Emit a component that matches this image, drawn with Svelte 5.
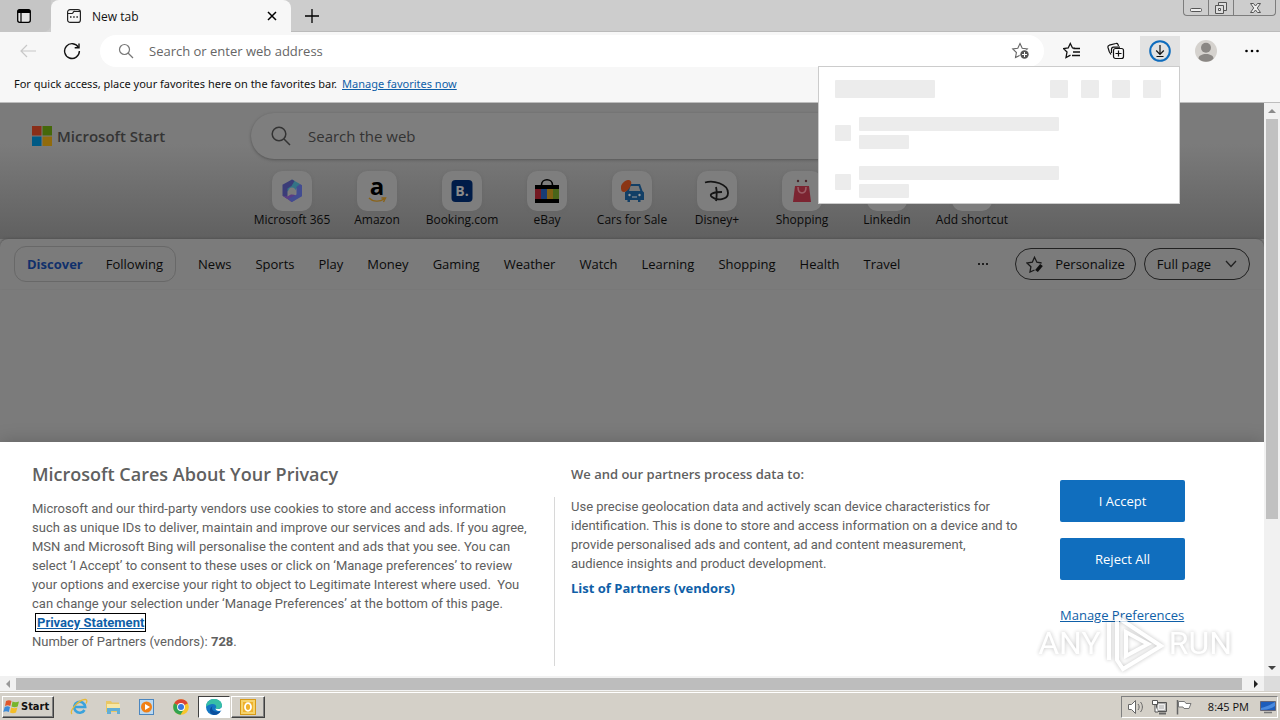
<script lang="ts">
	type Shortcut = { name: string; icon: string };

	const shortcuts: Shortcut[] = [
		{ name: 'Microsoft 365', icon: 'm365' },
		{ name: 'Amazon', icon: 'amazon' },
		{ name: 'Booking.com', icon: 'booking' },
		{ name: 'eBay', icon: 'ebay' },
		{ name: 'Cars for Sale', icon: 'cars' },
		{ name: 'Disney+', icon: 'disney' },
		{ name: 'Shopping', icon: 'shopping' },
		{ name: 'Linkedin', icon: 'linkedin' },
		{ name: 'Add shortcut', icon: 'add' }
	];

	const topics = ['News', 'Sports', 'Play', 'Money', 'Gaming', 'Weather', 'Watch', 'Learning', 'Shopping', 'Health', 'Travel'];

	let address = $state('');
	let query = $state('');
	let downloadsOpen = $state(true);
	let feed = $state('Discover');
</script>

<div class="desktop">
	<!-- Tab strip -->
	<header class="tabs">
		<button class="tab-actions" aria-label="Tab actions menu">
			<svg width="16" height="16" viewBox="0 0 16 16"><rect x="1.7" y="1.7" width="12.6" height="12.6" rx="2" fill="#e4e4e4" stroke="#000" stroke-width="1.3" /><path d="M1.5 5V3.5a2 2 0 0 1 2-2h9a2 2 0 0 1 2 2V5z" /><path d="M5 5v9" stroke="#000" stroke-width="1.2" /></svg>
		</button>
		<div class="tab">
			<svg width="16" height="16" viewBox="0 0 16 16" fill="none" stroke="#222" stroke-width="1.2"><rect x="1.6" y="1.6" width="12.8" height="12.8" rx="2.5" /><path d="M1.6 5.5H6c1 0 1-1 1.500-1.700S8.500 3.500 9 3.500h5" /><path d="M4 9h1.500M7.200 9h1.500M10.400 9h1.500" stroke-width="1.500" /></svg>
			<span>New tab</span>
			<button class="close-tab" aria-label="Close tab">
				<svg width="10" height="10" viewBox="0 0 10 10" stroke="#000" stroke-width="1.500"><path d="M1 1l8 8M9 1L1 9" /></svg>
			</button>
		</div>
		<button class="new-tab" aria-label="New tab">
			<svg width="14" height="14" viewBox="0 0 14 14" stroke="#000" stroke-width="1.300"><path d="M7 0v14M0 7h14" /></svg>
		</button>
		<div class="caption">
			<button aria-label="Minimize"><svg width="24" height="16" viewBox="0 0 24 16"><rect x="6.500" y="8.500" width="11" height="3" rx="1" fill="#eee" stroke="#555" /></svg></button>
			<button aria-label="Restore"><svg width="24" height="16" viewBox="0 0 24 16" fill="#ddd" stroke="#555"><path d="M9.500 2.500h8v8h-8z" /><path d="M6.500 5.500h8v8h-8z" /><path d="M9.500 8.500h2v2h-2z" fill="#fff" /></svg></button>
			<button class="wide" aria-label="Close"><svg width="24" height="16" viewBox="0 0 24 16"><path d="M7.500 3.500h3L12.500 6l2-2.500h3L14.300 8l3.200 4.500h-3l-2-2.500-2 2.500h-3L10.700 8z" fill="#eee" stroke="#555" /></svg></button>
		</div>
	</header>

	<!-- Address bar and browser buttons -->
	<div class="toolbar">
		<button class="tool" aria-label="Back" disabled>
			<svg width="16" height="14" viewBox="0 0 16 14" fill="none" stroke="#c8c8c8" stroke-width="1.200"><path d="M16 7H1M7 1L1 7l6 6" /></svg>
		</button>
		<button class="tool" aria-label="Refresh">
			<svg width="18" height="18" viewBox="0 0 18 18" fill="none" stroke="#111" stroke-width="1.400"><path d="M15.500 5.500A7.400 7.400 0 1 0 16.400 9" /><path d="M16 1.500v4.300h-4.300" /></svg>
		</button>
		<label class="address">
			<svg width="16" height="16" viewBox="0 0 16 16" fill="none" stroke="#777" stroke-width="1.200"><circle cx="6.500" cy="6.500" r="5" /><path d="M10 10l5 5" /></svg>
			<input type="text" placeholder="Search or enter web address" aria-label="Address" bind:value={address} />
			<button aria-label="Add this page to favorites">
				<svg width="20" height="18" viewBox="0 0 20 18"><path d="M9 1.500l2.200 4.700 5.100.7-3.700 3.600.9 5.100L9 13.200l-4.500 2.400.9-5.100L1.700 6.900l5.100-.7z" fill="none" stroke="#666" stroke-width="1.100" /><circle cx="13.500" cy="12.500" r="5" fill="#fff" /><circle cx="13.500" cy="12.500" r="4.200" fill="#555" /><path d="M13.500 10v5M11 12.500h5" stroke="#fff" /></svg>
			</button>
		</label>
		<button class="tool" aria-label="Favorites">
			<svg width="18" height="18" viewBox="0 0 18 18" fill="none" stroke="#111" stroke-width="1.300"><path d="M12 6.300L9.500 6 7.300 1.500 5.200 6l-4.600.6L4 10l-1 5.500 4.500-2.400" /><path d="M10.500 6.500H17M10 10h7M9 13.500h8" /></svg>
		</button>
		<button class="tool" aria-label="Collections">
			<svg width="18" height="18" viewBox="0 0 18 18" fill="none" stroke="#111" stroke-width="1.200"><path d="M4 12.500L2.200 9.500 1 5.500c-.3-1.200.3-2 1.300-2.300l6.500-1.700c1-.3 1.800.1 2.200 1l.5 1.500" /><path d="M4.500 11V7.500c0-1.500.6-2.300 2-2.300H13" /><rect x="6.500" y="6.500" width="10" height="10" rx="2" /><path d="M11.500 8.500v6M8.500 11.500h6" /></svg>
		</button>
		<div class="downloads">
			<button class="tool active" aria-label="Downloads" onclick={() => (downloadsOpen = !downloadsOpen)}>
				<svg width="22" height="22" viewBox="0 0 22 22" fill="none"><circle cx="11" cy="11" r="9.800" stroke="#0f6cbd" stroke-width="2" /><path d="M11 5v9M7.200 10.500L11 14.300l3.800-3.800M7.500 16.500h7" stroke="#111" stroke-width="1.200" /></svg>
			</button>
			{#if downloadsOpen}
				<div class="popup">
					<div class="popup-head">
						<i class="title"></i>
						<i></i><i></i><i></i><i></i>
					</div>
					{#each [0, 1] as row (row)}
						<div class="popup-row">
							<i class="thumb"></i>
							<div>
								<i class="long"></i>
								<i class="short"></i>
							</div>
						</div>
					{/each}
				</div>
			{/if}
		</div>
		<button class="tool profile" aria-label="Profile">
			<svg width="22" height="22" viewBox="0 0 22 22"><circle cx="11" cy="11" r="11" fill="#d5d2ce" /><circle cx="11" cy="7.800" r="5" fill="#8a8784" /><path d="M3.500 18.500c0-6 15-6 15 0-3.500 4.300-11.500 4.300-15 0z" fill="#8a8784" /></svg>
		</button>
		<button class="tool menu" aria-label="Settings and more">
			<svg width="14" height="4" viewBox="0 0 14 4"><circle cx="1.500" cy="2" r="1.300" /><circle cx="7" cy="2" r="1.300" /><circle cx="12.500" cy="2" r="1.300" /></svg>
		</button>
	</div>

	<div class="favorites">
		<span>For quick access, place your favorites here on the favorites bar.</span>
		<a href="#favorites">Manage favorites now</a>
	</div>

	<div class="viewport">
		<main class="page">
			<section class="hero">
				<a class="brand" href="#start">
					<svg width="20" height="20" viewBox="0 0 20 20"><path fill="#8a2e18" d="M0 0h9.500v9.500H0z" /><path fill="#45680a" d="M10.500 0H20v9.500h-9.500z" /><path fill="#005a85" d="M0 10.500h9.500V20H0z" /><path fill="#916b0c" d="M10.500 10.500H20V20h-9.500z" /></svg>
					<span>Microsoft Start</span>
				</a>
				<label class="search">
					<svg width="20" height="20" viewBox="0 0 20 20" fill="none" stroke="#333" stroke-width="1.500"><circle cx="8" cy="8" r="6.800" /><path d="M13 13l6 6" /></svg>
					<input type="text" placeholder="Search the web" aria-label="Search the web" bind:value={query} />
				</label>
				<nav class="shortcuts">
					{#each shortcuts as s (s.name)}
						<a href="#{s.icon}">
							<span class="tile">
								<svg width="26" height="26" viewBox="0 0 26 26">
									{#if s.icon === 'm365'}
										<path d="M13 1.500l8 4.500-5 6.500-3-2-5 3v-7z" fill="#347386" /><path d="M13 1.500L3.500 6.800v11l5 3.200V10.500l4-2.500 3-5z" fill="#3b3c78" /><path d="M3.500 17.500l9 6.500 3.500-2v-5l-3.500-1-4 2.500z" fill="#5a3c85" /><path d="M21 6l2 1.200v11L13 24l-4-3 8.500-4.500V9z" fill="#424c91" /><circle cx="13" cy="13" r="3.500" fill="#7b7b7b" />
									{:else if s.icon === 'amazon'}
										<text x="13" y="17" text-anchor="middle" font-family="Open Sans, sans-serif" font-weight="700" font-size="24">a</text><path d="M5 20c4 4 11 4 15 1M17.500 20h4l-2 4" fill="none" stroke="#8a6319" stroke-width="1.400" />
									{:else if s.icon === 'booking'}
										<rect x="2.500" y="2" width="21" height="22" rx="4" fill="#001c48" /><text x="13" y="18" text-anchor="middle" font-family="Open Sans, sans-serif" font-weight="700" font-size="14" fill="#8a8a8a">B.</text>
									{:else if s.icon === 'ebay'}
										<path d="M1 7h24v18H1z" /><path d="M7.500 7c0-7 11-7 11 0" fill="none" stroke="#000" stroke-width="1.600" /><path d="M1 11h6v10H1z" fill="#741922" /><path d="M7 11h6v10H7z" fill="#173c75" /><path d="M13 11h6v10h-6z" fill="#806013" /><path d="M19 11h6v10h-6z" fill="#49651a" />
									{:else if s.icon === 'cars'}
										<path d="M10 6h11l2.500 7 1.500 1.500V22h-3.500v2H19v-2h-8v2H8.500v-2H6v-8l2-1.500z" fill="#123f66" /><path d="M11.500 8h8.200l1.600 5H10z" fill="#777" /><circle cx="10.500" cy="17" r="1.200" fill="#999" /><circle cx="20.500" cy="17" r="1.200" fill="#999" /><path d="M13 19h5" stroke="#999" /><path d="M2 9c0-3 4-7 7-7 2.500 0 4 2 3 4.500C11 10 8 14 5 14S2 11 2 9z" fill="#8b3513" />
									{:else if s.icon === 'disney'}
										<path d="M1 4.500c8-2.500 23 1 23 10.500 0 7-11 8-16 4-4-3 2-5 10-5M12 9c1 4 1 8 0 14" fill="none" stroke="#151515" stroke-width="1.800" />
									{:else if s.icon === 'shopping'}
										<path d="M6 8h14l2 16H4z" fill="#7c2431" /><path d="M9 9c0 8 8 8 8 0" fill="none" stroke="#9b5c65" stroke-width="1.600" /><circle cx="9" cy="3" r="1.200" fill="#48252a" /><circle cx="17" cy="3" r="1.200" fill="#48252a" />
									{/if}
								</svg>
							</span>
							<span class="name">{s.name}</span>
						</a>
					{/each}
				</nav>
			</section>

			<section class="feed">
				<div class="feed-switch">
					{#each ['Discover', 'Following'] as name (name)}
						<button class:selected={feed === name} onclick={() => (feed = name)}>{name}</button>
					{/each}
				</div>
				<nav class="topics">
					{#each topics as topic (topic)}
						<a href="#{topic.toLowerCase()}">{topic}</a>
					{/each}
				</nav>
				<button class="more" aria-label="More topics">
					<svg width="12" height="4" viewBox="0 0 12 4"><circle cx="2" cy="2" r="1" /><circle cx="6" cy="2" r="1" /><circle cx="10" cy="2" r="1" /></svg>
				</button>
				<button class="pill">
					<svg width="18" height="18" viewBox="0 0 18 18" fill="none" stroke="#1a1a1a" stroke-width="1.300"><path d="M8.500 15l-4.500 2 .9-5.300L1 8l5.300-.8L8.500 2.200l2.400 5 4.700.8" /><path d="M15.500 10l-5 6" stroke="#111" stroke-width="3.500" /></svg>
					Personalize
				</button>
				<button class="pill view">
					Full page
					<svg width="12" height="8" viewBox="0 0 12 8" fill="none" stroke="#222" stroke-width="1.300"><path d="M1 1l5 5.500L11 1" /></svg>
				</button>
			</section>

			<!-- Consent banner -->
			<section class="consent">
				<div class="about">
					<h2>Microsoft Cares About Your Privacy</h2>
					<p>
						Microsoft and our third-party vendors use cookies to store and access information<br />
						such as unique IDs to deliver, maintain and improve our services and ads. If you agree,<br />
						MSN and Microsoft Bing will personalise the content and ads that you see. You can<br />
						select ‘I Accept’ to consent to these uses or click on ‘Manage preferences’ to review<br />
						your options and exercise your right to object to Legitimate Interest where used.&nbsp; You<br />
						can change your selection under ‘Manage Preferences’ at the bottom of this page.<br />
						<a class="statement" href="#privacy">Privacy Statement</a><br />
						Number of Partners (vendors): <b>728</b>.
					</p>
				</div>
				<div class="purposes">
					<h3>We and our partners process data to:</h3>
					<p>
						Use precise geolocation data and actively scan device characteristics for<br />
						identification. This is done to store and access information on a device and to<br />
						provide personalised ads and content, ad and content measurement,<br />
						audience insights and product development.
					</p>
					<a href="#vendors">List of Partners (vendors)</a>
				</div>
				<div class="choices">
					<button>I Accept</button>
					<button>Reject All</button>
					<a href="#preferences">Manage Preferences</a>
				</div>
			</section>
		</main>

		<div class="scroll-y">
			<svg width="16" height="16" viewBox="0 0 16 16"><path d="M4 10l4-4 4 4z" fill="#8a8a8a" /></svg>
			<div class="track"><div class="thumb"></div></div>
			<svg width="16" height="16" viewBox="0 0 16 16"><path d="M4 6l4 4 4-4z" fill="#444" /></svg>
		</div>
	</div>

	<div class="scroll-x">
		<svg width="16" height="16" viewBox="0 0 16 16"><path d="M10 4L6 8l4 4z" fill="#999" /></svg>
		<div class="thumb"></div>
		<svg width="16" height="16" viewBox="0 0 16 16"><path d="M6 4l4 4-4 4z" fill="#222" /></svg>
		<span class="corner"></span>
	</div>

	<footer class="taskbar">
		<button class="start">
			<svg width="17" height="16" viewBox="0 0 17 16"><path d="M3 2c2-1 4-1 5.500 0L7.300 7C5.500 6 4 6 2 7z" fill="#e0562a" /><path d="M9.500 2.500c2 1 4 1 6.500 0L14.700 7.500c-2 1-4 1-6.200 0z" fill="#77b52d" /><path d="M1.700 8c2-1 3.500-1 5.300 0L5.800 13c-2-1-3.500-1-5.500 0z" fill="#3c8ad8" /><path d="M8.200 8.500c2 1 4 1 6.200 0L13 13.500c-2 1-4 1-6 0z" fill="#f3bd28" /></svg>
			Start
		</button>
		<button class="task" aria-label="Internet Explorer">
			<svg width="18" height="18" viewBox="0 0 18 18" fill="none"><path d="M14.500 12a5.500 5.500 0 1 1 .7-3H4.500" stroke="#3aa2dc" stroke-width="2.600" /><path d="M2 16C-1 13 9 1 15.500 1.500c2 .3 1.500 2.500.5 4" stroke="#e7b935" stroke-width="1.300" /></svg>
		</button>
		<button class="task" aria-label="Explorer">
			<svg width="18" height="18" viewBox="0 0 18 18"><path d="M2 3h5l1 1.500h7V14H2z" fill="#e9c765" /><path d="M3 6h13v4H3z" fill="#f7e7a5" /><path d="M3 10h13v6h-3v-3H7v3H3z" fill="#62aed6" /></svg>
		</button>
		<button class="task" aria-label="Media Player">
			<svg width="18" height="18" viewBox="0 0 18 18"><rect x="1.500" y="1.500" width="14" height="15" fill="#bcd9f1" stroke="#4b86bf" /><circle cx="8.500" cy="9" r="5.500" fill="#f08016" /><path d="M7 6l5 3-5 3z" fill="#fff" /></svg>
		</button>
		<button class="task" aria-label="Chrome">
			<svg width="18" height="18" viewBox="0 0 18 18"><circle cx="9" cy="9" r="7.800" fill="#f7c52b" /><path d="M9 9L2.200 5.200A7.800 7.800 0 0 1 15.800 5.200z" fill="#dc4434" /><path d="M2.200 5.200A7.800 7.800 0 0 0 8.500 16.800L12 11 9 9z" fill="#31a350" /><circle cx="9" cy="9" r="3.900" fill="#fff" /><circle cx="9" cy="9" r="3" fill="#3977dd" /></svg>
		</button>
		<button class="task current" aria-label="Edge">
			<svg width="18" height="18" viewBox="0 0 18 18"><circle cx="9" cy="9" r="8" fill="#1477c4" /><path d="M1 9C1-1.500 17-1 17 7.500c0 3-4 4.500-6.500 3 2-2.500-.5-5-3.500-4.500S2 7.500 1 9z" fill="#37bfa7" /><path d="M7.500 8c-2 4 2 7 8 5.200-1.500 2.600-4 4-7 3.700-4-1-5-5.900-1-8.900z" fill="#0b4f9d" /><path d="M10.500 10.500c2.500 1.500 6.500 0 6.500-2v3.500c-2.500 1.800-6.500 1-6.500-1.500z" fill="#fff" /></svg>
		</button>
		<button class="task open" aria-label="Outlook">
			<svg width="18" height="18" viewBox="0 0 18 18"><rect x="1.500" y="1.500" width="15" height="15" fill="#f6d36c" stroke="#d79a17" /><path d="M4 4h10v10H4z" fill="#efb12c" /><ellipse cx="9" cy="9" rx="3" ry="3.800" fill="none" stroke="#fff" stroke-width="1.800" /></svg>
		</button>
		<div class="tray">
			<svg width="18" height="16" viewBox="0 0 18 16" fill="none" stroke="#666"><path d="M1.500 5.500h3l4-4v13l-4-4h-3z" fill="#fff" /><path d="M11 5c1.500 2 1.500 4 0 6M13.500 3c2.500 3 2.500 7 0 10" /></svg>
			<svg width="18" height="16" viewBox="0 0 18 16"><path d="M5.500 3.500h10v9h-10z" fill="#aaa" stroke="#555" /><path d="M7.500 5.500h6v5h-6z" fill="#ccc" stroke="#eee" /><path d="M8 14.500h7" stroke="#666" stroke-width="2" /><path d="M1.500 1.500h5v4h-5zM4 5.500V13h3" fill="#fff" stroke="#555" /></svg>
			<svg width="18" height="16" viewBox="0 0 18 16"><path d="M2.500 1v14.500" stroke="#666" stroke-width="1.500" /><path d="M3.500 2.500h6l1.500 2h5l-2 5H9l-1-1.500H3.500z" fill="#fff" stroke="#777" /></svg>
			<time>8:45 PM</time>
			<svg width="16" height="16" viewBox="0 0 16 16"><path d="M.5 2.500h15v9H.5z" fill="#1d5dbb" stroke="#667" /><path d="M1 9c5-1 9-3 14-6v4c-4 3-9 4-14 4z" fill="#4a8ade" /><path d="M4 13.500h8" stroke="#777" stroke-width="1.500" /></svg>
		</div>
	</footer>

	<div class="watermark">
		<span>ANY</span>
		<svg width="60" height="62" viewBox="0 0 60 62" fill="none" stroke="#fff" stroke-width="4"><path d="M4 10v38M12 5v43l6 9 38-23L12 5" /><path d="M21 20v24l22-12z" /></svg>
		<span>RUN</span>
	</div>
</div>

<style>
	:global(body) {
		margin: 0;
		background: #f7f7f7;
	}

	.desktop {
		display: flex;
		flex-direction: column;
		min-height: 100vh;
		position: relative;
		font: 12px 'Open Sans', 'Noto Sans', sans-serif;
		color: #111;
		white-space: nowrap;
	}

	button,
	input {
		font: inherit;
		color: inherit;
		border: none;
		background: none;
		padding: 0;
		margin: 0;
	}

	input {
		flex: 1;
		min-width: 0;
		outline: none;
	}

	input::placeholder {
		color: inherit;
		opacity: 1;
	}

	a {
		color: #0f5fa8;
	}

	svg {
		display: block;
		flex: none;
	}

	/* Tabs */
	.tabs {
		display: flex;
		height: 32px;
		background: #cdcdcd;
	}

	.tab-actions {
		width: 51px;
		display: flex;
		align-items: center;
		padding-left: 16px;
		background: #c5c5c5;
		border-radius: 0 0 8px 0;
	}

	.tab {
		display: flex;
		align-items: center;
		gap: 10px;
		width: 211px;
		padding: 0 14px 0 15px;
		background: #f7f7f7;
		border-radius: 8px 8px 0 0;
	}

	.close-tab {
		margin-left: auto;
	}

	.new-tab {
		width: 42px;
		display: flex;
		align-items: center;
		justify-content: center;
		border-bottom: 1px solid #bbb;
	}

	.caption {
		flex: 1;
		display: flex;
		justify-content: flex-end;
		padding-right: 4px;
		border-bottom: 1px solid #bbb;
	}

	.caption button {
		display: flex;
		justify-content: center;
		width: 25px;
		height: 16px;
		border: 1px solid #7d7d7d;
		border-top: none;
		border-right: none;
	}

	.caption button:first-child {
		border-radius: 0 0 0 4px;
	}

	.caption .wide {
		width: 43px;
		border-right: 1px solid #7d7d7d;
		border-radius: 0 0 4px 0;
	}

	/* Toolbar */
	.toolbar {
		display: flex;
		align-items: center;
		gap: 4px;
		padding: 3px 8px 4px;
		background: #f7f7f7;
	}

	.tool {
		display: flex;
		align-items: center;
		justify-content: center;
		width: 40px;
		height: 30px;
	}

	.tool.active {
		background: #e2e2e2;
	}

	.profile,
	.menu {
		margin-left: 2px;
	}

	.address {
		flex: 1;
		display: flex;
		align-items: center;
		gap: 15px;
		height: 32px;
		margin: 0 4px;
		padding: 0 13px 0 18px;
		box-sizing: border-box;
		border-radius: 16px;
		background: #fff;
		color: #666;
		font-size: 13px;
	}

	.downloads {
		position: relative;
	}

	.popup {
		position: absolute;
		top: 100%;
		right: 0;
		z-index: 2;
		width: 360px;
		height: 136px;
		border: 1px solid #ccc;
		background: #fff;
	}

	.popup i {
		display: block;
		width: 18px;
		height: 18px;
		border-radius: 1px;
		background: #ececec;
	}

	.popup-head {
		display: flex;
		gap: 13px;
		padding: 13px 18px 19px 16px;
	}

	.popup .title {
		width: 100px;
		margin-right: auto;
	}

	.popup-row {
		display: flex;
		align-items: center;
		gap: 8px;
		padding: 0 16px;
		margin-bottom: 17px;
	}

	.popup .thumb {
		width: 16px;
		height: 16px;
	}

	.popup .long {
		width: 200px;
		height: 14px;
		margin-bottom: 4px;
	}

	.popup .short {
		width: 50px;
		height: 14px;
	}

	.favorites {
		display: flex;
		align-items: center;
		gap: 5px;
		height: 32px;
		padding: 0 14px 6px;
		box-sizing: border-box;
		border-bottom: 1px solid #bdbdbd;
		font-family: 'Noto Sans', sans-serif;
		font-size: 11px;
		background: #f7f7f7;
	}

	/* Dimmed start page */
	.viewport {
		flex: 1;
		display: flex;
	}

	.page {
		flex: 1;
		min-width: 0;
		display: flex;
		flex-direction: column;
		background: #7b7b7b;
	}

	.page nav a {
		color: #0a0a0a;
		text-decoration: none;
	}

	.hero {
		display: grid;
		grid-template-columns: 1fr minmax(0, 762px) 1fr;
		row-gap: 12px;
		padding: 10px 0 11px;
		background: linear-gradient(#7b7b7b 0, #7b7b7b 30%, #606060 100%);
	}

	.brand {
		display: flex;
		align-items: center;
		gap: 5px;
		padding-left: 32px;
		color: #343434;
		font-size: 15px;
		font-weight: 600;
		text-decoration: none;
	}

	.search {
		display: flex;
		align-items: center;
		gap: 17px;
		height: 46px;
		padding: 0 20px;
		box-sizing: border-box;
		border-radius: 23px;
		background: #7e7e7e;
		box-shadow: 0 1px 3px #555;
		color: #333;
		font-size: 15px;
	}

	.shortcuts {
		grid-column: 1 / -1;
		display: flex;
		justify-content: center;
	}

	.shortcuts a {
		width: 85px;
		display: flex;
		flex-direction: column;
		align-items: center;
	}

	.tile {
		display: flex;
		align-items: center;
		justify-content: center;
		width: 40px;
		height: 40px;
		border-radius: 10px;
		background: #7e7e7e;
		box-shadow: 0 1px 3px #666;
	}

	.tile svg {
		overflow: visible;
	}

	.name {
		line-height: 17px;
	}

	.feed {
		display: flex;
		align-items: center;
		padding: 7px 14px;
		border-radius: 8px 8px 0 0;
		background: #7b7b7b;
		box-shadow: 0 -1px 2px #555;
		font-size: 13px;
		color: #0a0a0a;
	}

	.feed-switch {
		display: flex;
		gap: 23px;
		height: 36px;
		padding: 0 12px;
		margin-right: 22px;
		box-sizing: border-box;
		border: 1px solid #686868;
		border-radius: 12px;
	}

	.selected {
		color: #10306b;
		font-weight: 700;
	}

	.topics {
		display: flex;
		gap: 24px;
	}

	.more {
		margin-left: auto;
		padding: 10px 26px;
	}

	.pill {
		display: flex;
		align-items: center;
		gap: 11px;
		height: 32px;
		padding: 0 10px;
		box-sizing: border-box;
		border: 1px solid #222;
		border-radius: 16px;
	}

	.view {
		gap: 14px;
		padding: 0 12px;
		margin-left: 8px;
	}

	/* Consent banner */
	.consent {
		display: flex;
		gap: 16px;
		margin-top: auto;
		padding: 22px 32px 10px;
		background: #fff;
		box-shadow: 0 0 18px rgba(0, 0, 0, 0.2);
		color: #606060;
		font-size: 13px;
		line-height: 19px;
	}

	.consent h2,
	.consent h3,
	.consent p {
		margin: 0;
	}

	.consent h2 {
		margin-bottom: 12px;
		font-size: 18px;
		font-weight: 600;
		line-height: 21px;
	}

	.consent h3 {
		margin-bottom: 12px;
		font-size: 13px;
		font-weight: 600;
		line-height: 21px;
	}

	.consent p {
		font-family: Roboto, 'Open Sans', sans-serif;
	}

	.about {
		width: 506px;
	}

	.about p {
		min-height: 169px;
		width: 523px;
		padding-top: 2px;
		box-sizing: border-box;
		border-right: 1px solid #d8d8d8;
	}

	.statement {
		margin-left: 5px;
		outline: 1px solid #000;
		outline-offset: 1px;
		font-weight: 700;
	}

	.purposes {
		width: 457px;
		margin-left: 17px;
	}

	.purposes a {
		display: block;
		margin-top: 6px;
		font-weight: 700;
		text-decoration: none;
	}

	.choices {
		display: flex;
		flex-direction: column;
		gap: 16px;
		width: 125px;
		margin-left: 16px;
		padding-top: 16px;
	}

	.choices button {
		height: 42px;
		border-radius: 2px;
		background: #106ebe;
		color: #fff;
	}

	.choices a {
		margin-top: 10px;
	}

	/* Scrollbars */
	.scroll-y {
		display: flex;
		flex-direction: column;
		background: #f1f1f1;
	}

	.track {
		flex: 1;
		padding: 0 2px;
	}

	.track .thumb {
		height: 74%;
		background: #c1c1c1;
	}

	.scroll-x {
		display: flex;
		height: 16px;
		background: #f1f1f1;
	}

	.scroll-x .thumb {
		flex: 1;
		margin: 2px 6px 2px 0;
		background: #bdbdbd;
	}

	.corner {
		width: 16px;
		background: #dcdcdc;
	}

	/* Taskbar */
	.taskbar {
		display: flex;
		align-items: center;
		height: 28px;
		padding: 2px;
		box-sizing: border-box;
		border-top: 1px solid #fff;
		background: #d4d0c8;
		box-shadow: 0 -1px #d4d0c8;
	}

	.start {
		display: flex;
		align-items: center;
		gap: 1px;
		height: 22px;
		width: 52px;
		margin-right: 8px;
		box-sizing: border-box;
		border: 1px solid;
		border-color: #fff #404040 #404040 #fff;
		box-shadow: inset -1px -1px #808080;
		font: bold 11px 'DejaVu Sans Condensed', 'DejaVu Sans', sans-serif;
	}

	.task {
		display: flex;
		align-items: center;
		justify-content: center;
		width: 34px;
		height: 22px;
		box-sizing: border-box;
	}

	.current {
		width: 32px;
		border: 1px solid;
		border-color: #404040 #fff #fff #404040;
		background: #fff;
	}

	.open {
		margin-left: 1px;
		border: 1px solid;
		border-color: #fff #404040 #404040 #fff;
		box-shadow: inset -1px -1px #808080;
	}

	.tray {
		display: flex;
		align-items: center;
		gap: 6px;
		height: 22px;
		margin-left: auto;
		padding: 0 1px 0 5px;
		box-sizing: border-box;
		border: 1px solid;
		border-color: #808080 #fff #fff #808080;
		font-size: 11px;
	}

	.tray time {
		margin: 0 5px 0 9px;
	}

	.watermark {
		position: absolute;
		right: 48px;
		bottom: 46px;
		display: flex;
		align-items: center;
		gap: 4px;
		color: #fff;
		font: 32px Roboto, 'Liberation Sans', sans-serif;
		filter: drop-shadow(0 0 2px rgba(0, 0, 0, 0.3));
		opacity: 0.8;
		pointer-events: none;
	}
</style>
